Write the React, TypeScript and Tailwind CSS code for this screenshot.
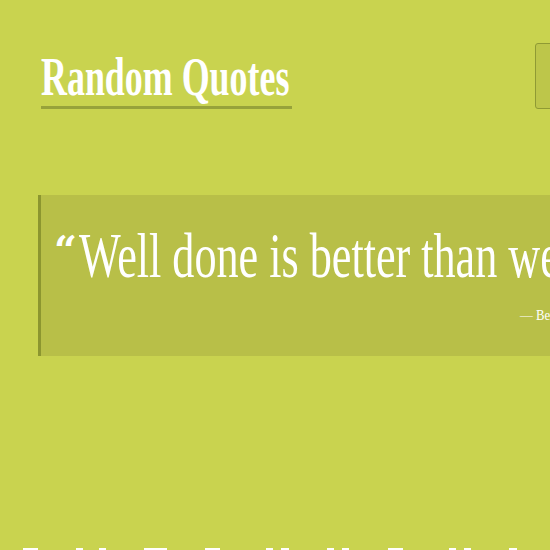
import React from "react";

const blocks: [number, number][] = [
  [23, 15], [76, 7], [99, 7], [144, 23], [205, 15], [266, 7], [281, 8], [327, 7], [342, 7], [388, 15], [449, 7], [464, 7], [509, 8],
];

export default function App() {
  return (
    <div className="relative w-[550px] h-[550px] overflow-hidden bg-[#c9d34f]" style={{ fontFamily: '"Liberation Serif", serif' }}>
      <div className="w-[720px]">
        <header className="flex items-start justify-between pt-[43px] pl-[41px]">
          <div className="w-[251px] border-b-[3px] border-[#97a23a] pt-[5px]">
            <h1 className="origin-left scale-x-[0.665] whitespace-nowrap text-[54px] font-bold leading-[58px] text-white">
              Random Quotes
            </h1>
          </div>
          <button className="mr-[125px] h-[66px] w-[60px] rounded-[3px] border-[1.5px] border-[#8f9a34] bg-[#bdc64a]"></button>
        </header>
        <section className="ml-[38px] mt-[86px] h-[161px] border-l-[3px] border-[#8c962f] bg-[#b8bf48] pl-[13px] pt-[24px]">
          <p className="flex items-start whitespace-nowrap text-white">
            <span className="mt-[16px] text-[40px] font-bold leading-[30px]" style={{ fontFamily: '"DejaVu Serif", serif' }}>“</span>
            <span className="ml-[2px] origin-left scale-x-[0.69] text-[64px] leading-[74px]">Well done is better than well said.</span>
          </p>
          <p className="mt-[11px] pl-[466px] whitespace-nowrap text-[15px] text-white">
            <span className="inline-block origin-left scale-x-[0.85]">— Benjamin Franklin</span>
          </p>
        </section>
      </div>
      <div className="absolute bottom-0 left-0 h-[2px] w-full">
        {blocks.map(([x, w], i) => (
          <div key={i} className="absolute top-0 h-[2px] bg-white" style={{ left: x, width: w }} />
        ))}
      </div>
    </div>
  );
}
